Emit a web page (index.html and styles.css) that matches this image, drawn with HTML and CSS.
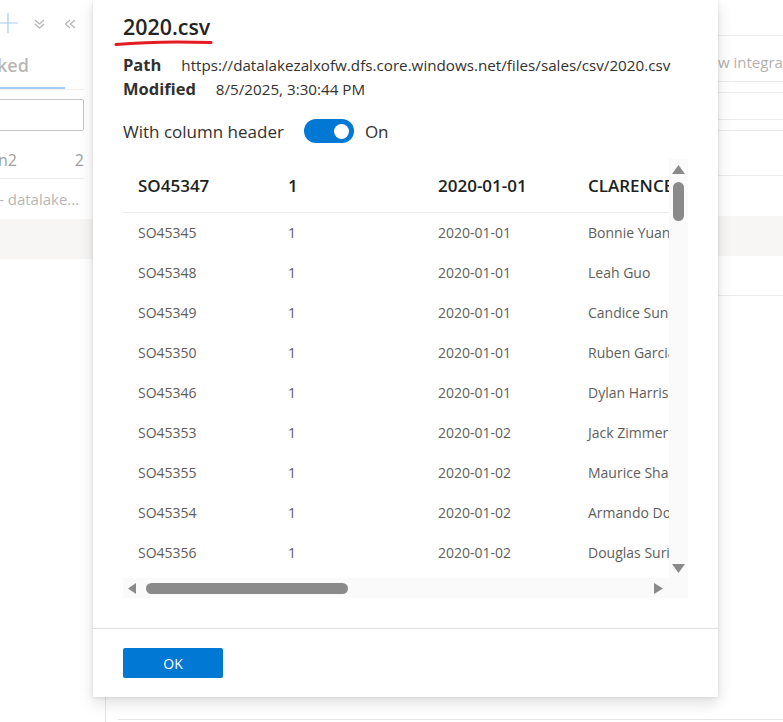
FILE: index.html
```html
<!DOCTYPE html>
<html lang="en">
<head>
<meta charset="utf-8">
<title>2020.csv</title>
<link rel="stylesheet" href="styles.css">
</head>
<body>
<div class="page">
  <aside class="side">
    <div class="side-tools">
      <svg class="ic ic-plus" width="20" height="20" viewBox="0 0 20 20"><path d="M10 0v20M0 10h20" stroke="#a9cbeb" stroke-width="1.2" fill="none"/></svg>
      <svg class="ic ic-expand" width="11" height="10" viewBox="0 0 11 10"><path d="M1 1l4.5 4 4.5-4M1 5l4.5 4 4.5-4" stroke="#b5b3b1" stroke-width="1.1" fill="none"/></svg>
      <svg class="ic ic-collapse" width="12" height="10" viewBox="0 0 12 10"><path d="M6 1L1.5 5 6 9M11 1L6.5 5 11 9" stroke="#b5b3b1" stroke-width="1.1" fill="none"/></svg>
    </div>
    <div class="side-tab">ked</div>
    <div class="tab-rule"><span class="tab-active"></span></div>
    <div class="side-search"></div>
    <div class="side-group"><span>n2</span><span>2</span></div>
    <div class="side-item">- datalake...</div>
    <div class="side-sel"></div>
  </aside>
  <main class="main">
    <div class="m-row m-h35"></div>
    <div class="m-row m-toolbar"><span class="m-text">w integra</span></div>
    <div class="m-row m-h10"></div>
    <div class="m-row m-h26"></div>
    <div class="m-row m-h10"></div>
    <div class="m-row m-h44"></div>
    <div class="m-plain m-h39"></div>
    <div class="m-band"></div>
    <div class="m-row m-h39"></div>
    <div class="m-bottom"></div>
  </main>
</div>

<section class="dialog">
  <div class="dlg-body">
    <div class="title-wrap">
      <h1 class="title">2020.csv</h1>
      <svg class="scribble" width="100" height="9" viewBox="0 0 100 9"><path d="M2 5.5C30 3 60 2.2 97 3.6" stroke="#e31b23" stroke-width="3" stroke-linecap="round" fill="none"/></svg>
    </div>
    <div class="meta">
      <div class="meta-row"><span class="meta-label">Path</span><span class="meta-value">https://datalakezalxofw.dfs.core.windows.net/files/sales/csv/2020.csv</span></div>
      <div class="meta-row"><span class="meta-label">Modified</span><span class="meta-value">8/5/2025, 3:30:44 PM</span></div>
    </div>
    <div class="toggle-row">
      <span class="toggle-label">With column header</span>
      <span class="switch"><span class="knob"></span></span>
      <span class="toggle-state">On</span>
    </div>
    <div class="grid-wrap">
      <div class="viewport">
        <table class="data">
          <thead>
            <tr><th>SO45347</th><th>1</th><th>2020-01-01</th><th>CLARENCE</th></tr>
          </thead>
          <tbody>
            <tr><td>SO45345</td><td>1</td><td>2020-01-01</td><td>Bonnie Yuan</td></tr>
            <tr><td>SO45348</td><td>1</td><td>2020-01-01</td><td>Leah Guo</td></tr>
            <tr><td>SO45349</td><td>1</td><td>2020-01-01</td><td>Candice Sun</td></tr>
            <tr><td>SO45350</td><td>1</td><td>2020-01-01</td><td>Ruben Garcia</td></tr>
            <tr><td>SO45346</td><td>1</td><td>2020-01-01</td><td>Dylan Harris</td></tr>
            <tr><td>SO45353</td><td>1</td><td>2020-01-02</td><td>Jack Zimmerman</td></tr>
            <tr><td>SO45355</td><td>1</td><td>2020-01-02</td><td>Maurice Shan</td></tr>
            <tr><td>SO45354</td><td>1</td><td>2020-01-02</td><td>Armando Dominguez</td></tr>
            <tr><td>SO45356</td><td>1</td><td>2020-01-02</td><td>Douglas Suri</td></tr>
            <tr><td>SO45357</td><td>1</td><td>2020-01-02</td><td>Ian Jenkins</td></tr>
          </tbody>
        </table>
      </div>
      <div class="vscroll">
        <svg class="arr arr-up" width="13" height="9" viewBox="0 0 13 9"><path d="M6.5 0L13 9H0z" fill="#8a8a8a"/></svg>
        <span class="vthumb"></span>
        <svg class="arr arr-down" width="13" height="9" viewBox="0 0 13 9"><path d="M0 0h13L6.5 9z" fill="#8a8a8a"/></svg>
      </div>
      <div class="hscroll">
        <svg class="arr arr-left" width="8" height="11" viewBox="0 0 8 11"><path d="M8 0v11L0 5.5z" fill="#8a8a8a"/></svg>
        <span class="hthumb"></span>
        <svg class="arr arr-right" width="9" height="11" viewBox="0 0 9 11"><path d="M0 0l9 5.5L0 11z" fill="#8a8a8a"/></svg>
      </div>
      <div class="corner"></div>
    </div>
  </div>
  <footer class="dlg-foot">
    <button class="ok" type="button">OK</button>
  </footer>
</section>
</body>
</html>
```

FILE: styles.css
```css
* { box-sizing: border-box; }
html, body { margin: 0; padding: 0; }
body {
  width: 783px;
  height: 722px;
  overflow: hidden;
  position: relative;
  background: #ffffff;
  font-family: "Open Sans", "Noto Sans", sans-serif;
  color: #323130;
}

/* ---------- background page ---------- */
.page {
  display: flex;
  height: 722px;
}
.side {
  width: 106px;
  flex: none;
  border-right: 1px solid #e6e5e4;
  display: flex;
  flex-direction: column;
  padding-right: 21px;
  overflow: hidden;
}
.side-tools {
  height: 47px;
  display: flex;
  align-items: flex-start;
  padding-top: 13px;
}
.ic { display: block; flex: none; }
.ic-plus { margin-left: -2px; }
.ic-expand { margin-left: 16px; margin-top: 6px; }
.ic-collapse { margin-left: 19px; margin-top: 6px; }
.side-tab {
  height: 40px;
  font-size: 18px;
  line-height: 28px;
  padding-top: 4px;
  font-weight: 600;
  color: #b9b7b5;
  margin-left: -3px;
}
.tab-rule {
  height: 3px;
  border-bottom: 1px solid #f1f0ef;
  display: flex;
}
.tab-active {
  width: 65px;
  height: 2px;
  background: #a9cdee;
}
.side-search {
  margin-top: 9px;
  height: 32px;
  margin-left: -10px;
  border: 1px solid #c8c6c4;
  border-radius: 2px;
}
.side-group {
  height: 48px;
  display: flex;
  justify-content: space-between;
  align-items: center;
  font-size: 16px;
  color: #a19f9d;
  border-bottom: 1px solid #efeeed;
  padding-top: 11px;
  margin-left: -2px;
}
.side-item {
  height: 40px;
  font-size: 15px;
  line-height: 40px;
  color: #b8b6b4;
  white-space: nowrap;
  margin-left: -1px;
}
.side-sel {
  height: 40px;
  margin-right: -21px;
  background: #f7f6f5;
}

.main {
  flex: 1;
  display: flex;
  flex-direction: column;
  padding-left: 12px;
}
.m-row { border-bottom: 1px solid #ecebea; }
.m-h35 { height: 36px; }
.m-toolbar {
  height: 46px;
  display: flex;
  align-items: center;
  padding-top: 6px;
}
.m-text {
  margin-left: 600px;
  font-size: 15px;
  color: #b3b0ad;
  white-space: nowrap;
}
.m-h10 { height: 11px; }
.m-h26 { height: 27px; }
.m-h44 { height: 45px; }
.m-h39 { height: 40px; }
.m-band { height: 40px; background: #f7f6f5; }
.m-bottom {
  margin-top: auto;
  height: 3px;
  border-top: 1px solid #e8e7e6;
}

/* ---------- dialog ---------- */
.dialog {
  position: absolute;
  left: 93px;
  top: 0;
  width: 625px;
  height: 697px;
  background: #ffffff;
  box-shadow: 0 6.4px 14.4px rgba(0, 0, 0, 0.13), 0 1.2px 3.6px rgba(0, 0, 0, 0.11);
  display: flex;
  flex-direction: column;
}
.dlg-body {
  padding: 12px 30px 0 30px;
}
.title-wrap {
  position: relative;
}
.title {
  margin: 0;
  font-size: 21.4px;
  line-height: 29px;
  font-weight: 600;
  color: #252423;
}
.scribble {
  position: absolute;
  left: -9px;
  top: 27px;
}
.meta {
  margin-top: 12px;
}
.meta-row {
  display: flex;
  align-items: baseline;
  gap: 20px;
  height: 24px;
  line-height: 24px;
  white-space: nowrap;
}
.meta-label {
  font-size: 16.5px;
  font-weight: 700;
  color: #323130;
}
.meta-value {
  font-size: 15.2px;
  color: #323130;
}
.toggle-row {
  margin-top: 18px;
  display: flex;
  align-items: center;
  height: 24px;
}
.toggle-label {
  font-size: 17px;
  color: #323130;
}
.switch {
  margin-left: 20px;
  width: 50px;
  height: 24px;
  border-radius: 12px;
  background: #0078d4;
  display: flex;
  align-items: center;
  justify-content: flex-end;
  padding-right: 5px;
}
.knob {
  width: 15px;
  height: 15px;
  border-radius: 50%;
  background: #ffffff;
}
.toggle-state {
  margin-left: 11px;
  font-size: 17px;
  color: #323130;
}

.grid-wrap {
  margin-top: 16px;
  width: 565px;
  display: grid;
  grid-template-columns: 546px 19px;
  grid-template-rows: 419px 20px;
}
.viewport {
  overflow: hidden;
}
.data {
  border-collapse: collapse;
  table-layout: fixed;
  width: 600px;
}
.data th, .data td {
  width: 150px;
  padding: 0 0 0 15px;
  text-align: left;
  white-space: nowrap;
  overflow: hidden;
}
.data th {
  height: 53px;
  font-size: 17px;
  font-weight: 600;
  color: #201f1e;
  border-bottom: 1px solid #edebe9;
}
.data td {
  height: 40px;
  font-size: 14px;
  color: #605e5c;
}
.vscroll {
  background: #fafafa;
  display: flex;
  flex-direction: column;
  align-items: center;
  padding: 6px 0 5px;
}
.arr { display: block; flex: none; }
.vthumb {
  margin-top: 8px;
  width: 11px;
  height: 39px;
  border-radius: 6px;
  background: #8a8a8a;
}
.arr-down { margin-top: auto; }
.hscroll {
  background: #fafafa;
  display: flex;
  align-items: center;
  padding: 0 6px 0 5px;
}
.hthumb {
  margin-left: 10px;
  width: 202px;
  height: 11px;
  border-radius: 6px;
  background: #8a8a8a;
}
.arr-right { margin-left: auto; }
.corner { background: #fafafa; }

.dlg-foot {
  margin-top: auto;
  border-top: 1px solid #e1dfdd;
  padding: 19px 30px;
}
.ok {
  display: block;
  width: 100px;
  height: 30px;
  border: none;
  border-radius: 2px;
  background: #0078d4;
  color: #ffffff;
  font-family: "Open Sans", "Noto Sans", sans-serif;
  font-size: 14px;
  padding: 0;
}
```
